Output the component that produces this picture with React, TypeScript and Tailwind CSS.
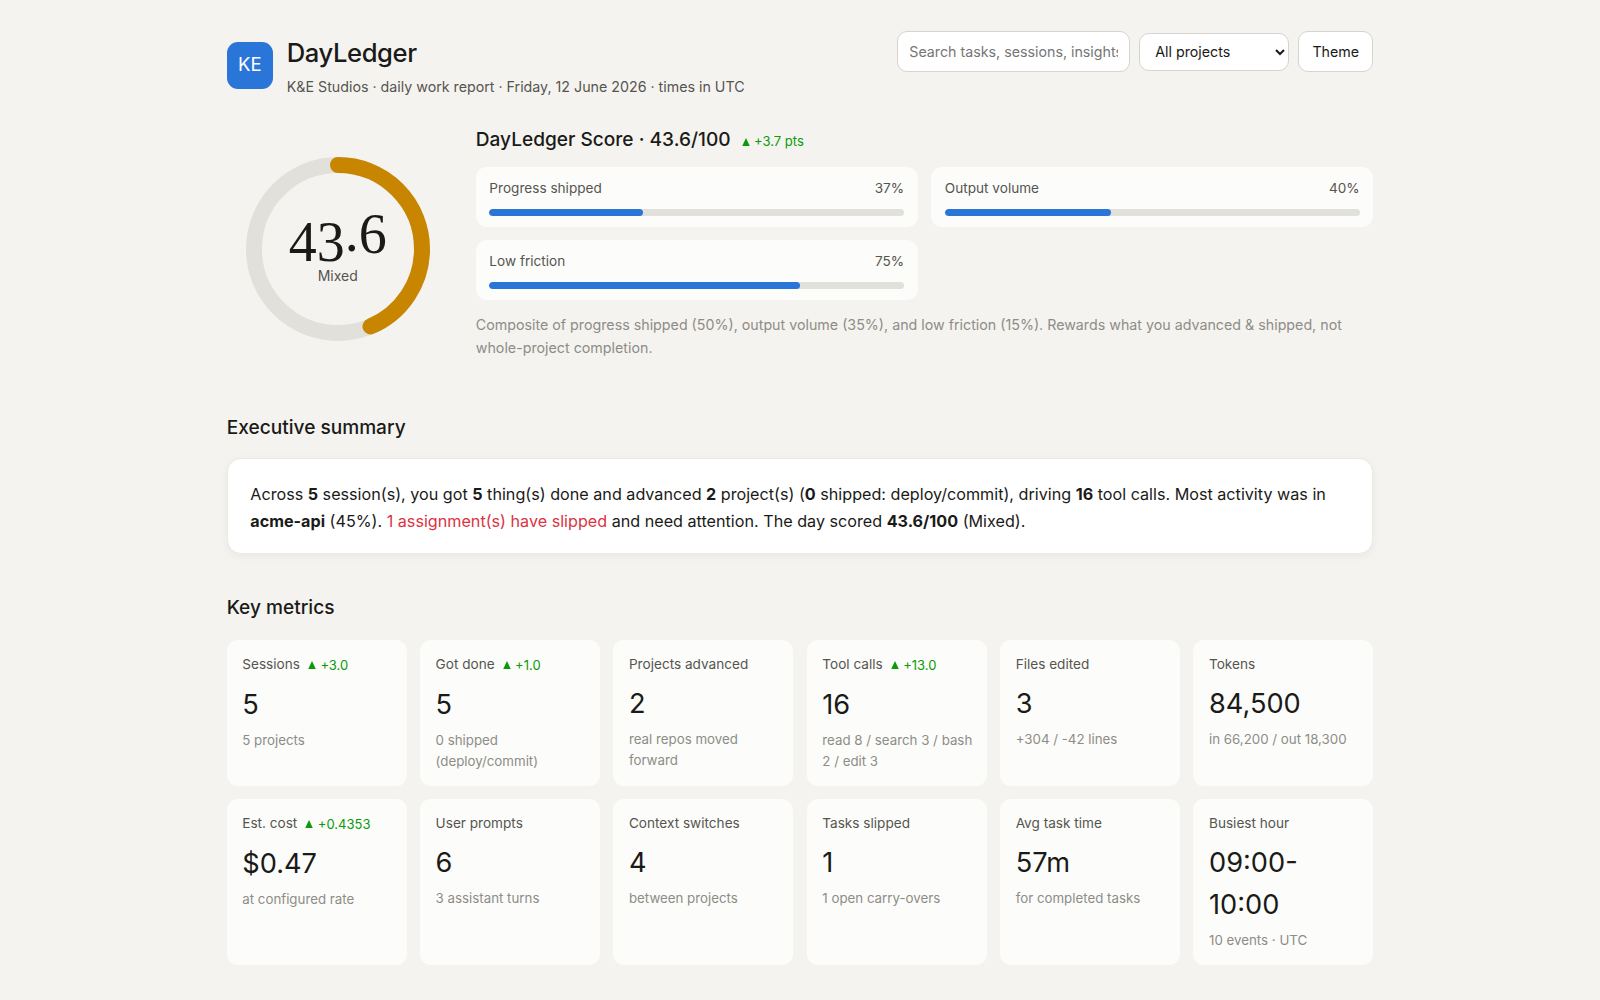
import React from "react";

type Metric = { label: string; delta?: string; value: string; sub: string };

const metrics: Metric[] = [
  { label: "Sessions", delta: "+3.0", value: "5", sub: "5 projects" },
  { label: "Got done", delta: "+1.0", value: "5", sub: "0 shipped (deploy/commit)" },
  { label: "Projects advanced", value: "2", sub: "real repos moved forward" },
  { label: "Tool calls", delta: "+13.0", value: "16", sub: "read 8 / search 3 / bash 2 / edit 3" },
  { label: "Files edited", value: "3", sub: "+304 / -42 lines" },
  { label: "Tokens", value: "84,500", sub: "in 66,200 / out 18,300" },
  { label: "Est. cost", delta: "+0.4353", value: "$0.47", sub: "at configured rate" },
  { label: "User prompts", value: "6", sub: "3 assistant turns" },
  { label: "Context switches", value: "4", sub: "between projects" },
  { label: "Tasks slipped", value: "1", sub: "1 open carry-overs" },
  { label: "Avg task time", value: "57m", sub: "for completed tasks" },
  { label: "Busiest hour", value: "09:00-10:00", sub: "10 events · UTC" },
];

function Delta({ text, className }: { text: string; className: string }) {
  return (
    <span className={`inline-flex items-center gap-[4.5px] text-[#0a9a0a] ${className}`}>
      <svg width="8" height="8.5" viewBox="0 0 8 8.5" className="shrink-0">
        <polygon points="4,0 8,8.5 0,8.5" fill="#0a9a0a" />
      </svg>
      {text}
    </span>
  );
}

function Bar({ label, pct }: { label: string; pct: number }) {
  return (
    <div className="h-[60px] rounded-[11px] bg-[#fcfcfa] px-[13.6px] pt-[11px]">
      <div className="flex justify-between text-[13.6px] leading-[21px] text-[#55554f]">
        <span>{label}</span>
        <span>{pct}%</span>
      </div>
      <div className="mt-[10px] h-[7px] overflow-hidden rounded-full bg-[#e1e0db]">
        <div className="h-full rounded-full bg-[#2a75d8]" style={{ width: `${pct}%` }} />
      </div>
    </div>
  );
}

function Ring({ score }: { score: number }) {
  const r = 84;
  const c = 2 * Math.PI * r;
  return (
    <div className="relative h-[184px] w-[184px]">
      <svg width="184" height="184" viewBox="0 0 184 184" className="block -rotate-90">
        <circle cx="92" cy="92" r={r} fill="none" stroke="#e1e0db" strokeWidth="16" />
        <circle
          cx="92"
          cy="92"
          r={r}
          fill="none"
          stroke="#c78500"
          strokeWidth="16"
          strokeLinecap="round"
          strokeDasharray={`${(c * score) / 100} ${c}`}
        />
      </svg>
      <div className="absolute inset-0 flex flex-col items-center pt-[57px]">
        <div className="h-[56px] font-['Liberation_Serif',serif] text-[56px] leading-[56px] text-[#1a1a18]">
          43<span className="align-[10px] leading-[0]">.</span>
          <span className="align-[8px] leading-[0]">6</span>
        </div>
        <div className="mt-[-3px] text-[14px] leading-[18px] text-[#55554f]">Mixed</div>
      </div>
    </div>
  );
}

export default function App() {
  return (
    <div className="min-h-[1000px] bg-[#f5f3ef] font-['Inter',sans-serif] text-[#1a1a18]">
      <div className="mx-auto w-[1146.5px] pt-[31px] pb-[35px]">
        <header className="flex items-start justify-between">
          <div className="flex items-start gap-[14px] pt-[6px]">
            <div className="mt-[5px] flex h-[47px] w-[46px] items-center justify-center rounded-[11px] bg-[#2a75d8] pb-[2px] text-[18.5px] text-white">
              KE
            </div>
            <div>
              <h1 className="text-[25.6px] leading-[32px] font-medium tracking-[-0.4px]">DayLedger</h1>
              <p className="mt-[7px] text-[14.24px] leading-[22px] text-[#55554f]">
                K&amp;E Studios · daily work report · Friday, 12 June 2026 · times in UTC
              </p>
            </div>
          </div>
          <div className="flex items-center gap-[9px]">
            <input
              placeholder="Search tasks, sessions, insights…"
              className="h-[41px] w-[233px] rounded-[10px] border border-[#d5d4ce] bg-white px-[11px] text-[14.24px] text-[#1a1a18] outline-none placeholder:text-[#767676]"
            />
            <select className="h-[38px] w-[150px] rounded-[10px] border border-[#d5d4ce] bg-white px-[11px] text-[14.24px] text-[#1a1a18]">
              <option>All projects</option>
            </select>
            <button className="h-[41px] w-[75px] rounded-[10px] border border-[#d5d4ce] bg-white text-[14.24px] text-[#1a1a18]">
              Theme
            </button>
          </div>
        </header>

        <section className="mt-[26px] flex">
          <div className="w-[249px] shrink-0 pl-[19px] pt-[33px]">
            <Ring score={43.6} />
          </div>
          <div className="min-w-0 flex-1">
            <div className="flex items-baseline gap-[11px]">
              <h2 className="text-[19.1px] leading-[30px] font-medium">DayLedger Score · 43.6/100</h2>
              <Delta text="+3.7 pts" className="text-[13px]" />
            </div>
            <div className="mt-[13px] grid grid-cols-2 gap-x-[13.5px] gap-y-[13.3px]">
              <Bar label="Progress shipped" pct={37} />
              <Bar label="Output volume" pct={40} />
              <Bar label="Low friction" pct={75} />
            </div>
            <p className="mt-[13px] text-[14.25px] leading-[23px] text-[#8d8d87]">
              Composite of progress shipped (50%), output volume (35%), and low friction (15%). Rewards what you advanced &amp; shipped, not whole-project completion.
            </p>
          </div>
        </section>

        <h2 className="mt-[53px] text-[19.1px] leading-[30px] font-medium">Executive summary</h2>
        <div className="mt-[16px] h-[96px] rounded-[14px] border border-[#ebeae5] bg-white px-[22.5px] pt-[22px] text-[16.16px] leading-[26.7px] shadow-[0_2px_8px_rgba(0,0,0,0.05)]">
          Across <b className="font-bold">5</b> session(s), you got <b className="font-bold">5</b> thing(s) done and advanced <b className="font-bold">2</b> project(s) (<b className="font-bold">0</b> shipped: deploy/commit), driving <b className="font-bold">16</b> tool calls. Most activity was in <b className="font-bold">acme-api</b> (45%). <span className="text-[#d9343f]">1 assignment(s) have slipped</span> and need attention. The day scored <b className="font-bold">43.6/100</b> (Mixed).
        </div>

        <h2 className="mt-[38px] text-[19.1px] leading-[30px] font-medium">Key metrics</h2>
        <div className="mt-[18px] grid grid-cols-6 gap-x-[13.6px] gap-y-[13px]">
          {metrics.map((m) => (
            <div key={m.label} className="rounded-[11px] bg-[#fcfcfa] pt-[14px] pr-[12px] pb-[14px] pl-[15.5px]">
              <div className="flex items-baseline gap-[8px] text-[13.6px] leading-[20px] text-[#55554f]">
                <span>{m.label}</span>
                {m.delta && <Delta text={m.delta} className="text-[13px]" />}
              </div>
              <div className="mt-[9px] pr-[3px] text-[27.2px] leading-[42px]">{m.value}</div>
              <div className="mt-[4px] text-[13.3px] leading-[21px] text-[#8d8d87]">{m.sub}</div>
            </div>
          ))}
        </div>
      </div>
    </div>
  );
}
